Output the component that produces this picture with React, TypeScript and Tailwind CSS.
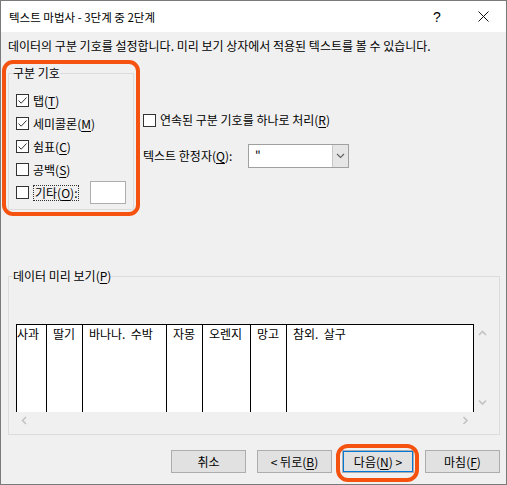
import React from 'react';

// Windows-style "Text Import Wizard" step 2 dialog

const Mn = ({ k }: { k: string }) => (
  <>
    (<span className="underline underline-offset-2">{k}</span>)
  </>
);

const Check = ({ checked }: { checked?: boolean }) => (
  <span className="w-[13px] h-[13px] border border-[#333333] bg-white flex items-center justify-center shrink-0">
    {checked && (
      <svg width="11" height="11" viewBox="0 0 11 11">
        <path d="M1.5 5.5 L4.2 8.2 L9.5 2.5" stroke="#333333" strokeWidth="1" fill="none" />
      </svg>
    )}
  </span>
);

const Chevron = ({ dir }: { dir: 'up' | 'down' | 'left' | 'right' }) => {
  const d = {
    up: 'M1 5 L4.5 1.5 L8 5',
    down: 'M1 1.5 L4.5 5 L8 1.5',
    left: 'M5 1 L1.5 4.5 L5 8',
    right: 'M1.5 1 L5 4.5 L1.5 8',
  }[dir];
  const horiz = dir === 'left' || dir === 'right';
  return (
    <svg width={horiz ? 7 : 9} height={horiz ? 9 : 7} viewBox={horiz ? '0 0 7 9' : '0 0 9 7'}>
      <path d={d} stroke="#c2c2c2" strokeWidth="1.6" fill="none" />
    </svg>
  );
};

const columns = [
  { text: '사과', w: 'w-[30px]', pad: 'pl-0' },
  { text: '딸기', w: 'w-[36px]', pad: 'pl-[6px]' },
  { text: '바나나.  수박', w: 'w-[84px]', pad: 'pl-[6px]' },
  { text: '자몽', w: 'w-[36px]', pad: 'pl-[6px]' },
  { text: '오렌지', w: 'w-[48px]', pad: 'pl-[6px]' },
  { text: '망고', w: 'w-[36px]', pad: 'pl-[6px]' },
  { text: '참외.  살구', w: 'w-[187px]', pad: 'pl-[6px]' },
];

const Button = ({ children, className }: { children: React.ReactNode; className: string }) => (
  <div
    className={`h-[23px] bg-[#e1e1e1] border border-[#adadad] flex items-center justify-center leading-[16px] ${className}`}
  >
    {children}
  </div>
);

export default function App() {
  return (
    <div className="relative w-[507px] h-[485px] bg-[#f0f0f0] border border-[#7a7a7a] flex flex-col text-[12px] text-black font-['Noto_Sans_CJK_KR',sans-serif] overflow-hidden">
      {/* Title bar */}
      <div className="h-[31px] bg-white flex items-center pl-[8px] shrink-0">
        <span className="flex-1 text-[11.5px] leading-[16px]">텍스트 마법사 - 3단계 중 2단계</span>
        <span className="w-[46px] text-center text-[14px] leading-[16px] font-['Liberation_Sans',sans-serif]">?</span>
        <span className="w-[46px] flex items-center justify-center">
          <svg width="11" height="11" viewBox="0 0 11 11">
            <path d="M0.5 0.5 L10.5 10.5 M10.5 0.5 L0.5 10.5" stroke="#111111" strokeWidth="1" />
          </svg>
        </span>
      </div>

      {/* Description */}
      <div className="pl-[7px] pt-[6px] leading-[16px]">
        데이터의 구분 기호를 설정합니다. 미리 보기 상자에서 적용된 텍스트를 볼 수 있습니다.
      </div>

      {/* Delimiters + options */}
      <div className="flex mt-[12px]">
        <fieldset className="ml-[7px] w-[126px] h-[144px] border border-[#dcdcdc]">
          <legend className="ml-[4px] leading-[14px]">구분 기호</legend>
          <div className="pl-[7px] pt-[9px] flex flex-col">
            <div className="h-[23px] flex items-center gap-[4px]">
              <Check checked />
              <span>
                탭<Mn k="T" />
              </span>
            </div>
            <div className="h-[23px] flex items-center gap-[4px]">
              <Check checked />
              <span>
                세미콜론<Mn k="M" />
              </span>
            </div>
            <div className="h-[23px] flex items-center gap-[4px]">
              <Check checked />
              <span>
                쉼표<Mn k="C" />
              </span>
            </div>
            <div className="h-[23px] flex items-center gap-[4px]">
              <Check />
              <span>
                공백<Mn k="S" />
              </span>
            </div>
            <div className="h-[23px] flex items-center gap-[4px]">
              <Check />
              <span className="border border-dotted border-[#333333] leading-[14px] px-[1px]">
                기타<Mn k="O" />:
              </span>
              <span className="ml-[7px] w-[36px] h-[23px] bg-white border border-[#adadad]" />
            </div>
          </div>
        </fieldset>

        <div className="ml-[9px] flex flex-col">
          <div className="mt-[46px] h-[16px] flex items-center gap-[4px]">
            <Check />
            <span className="leading-[16px]">
              연속된 구분 기호를 하나로 처리<Mn k="R" />
            </span>
          </div>
          <div className="mt-[16px] h-[24px] flex items-center">
            <span className="w-[105px] leading-[16px]">
              텍스트 한정자<Mn k="Q" />:
            </span>
            <div className="w-[101px] h-[24px] border border-[#a0a0a0] bg-white flex">
              <span className="flex-1 pl-[6px] leading-[20px]">"</span>
              <span className="w-[16px] bg-[#e6e6e6] border-l border-[#c8c8c8] flex items-center justify-center">
                <svg width="9" height="6" viewBox="0 0 9 6">
                  <path d="M1 1 L4.5 4.5 L8 1" stroke="#606060" strokeWidth="1.1" fill="none" />
                </svg>
              </span>
            </div>
          </div>
        </div>
      </div>

      {/* Data preview */}
      <fieldset className="ml-[7px] mt-[59px] w-[492px] h-[166px] border border-[#dcdcdc]">
        <legend className="ml-[4px] leading-[14px]">
          데이터 미리 보기<Mn k="P" />
        </legend>
        <div className="ml-[7px] mt-[41px] w-[475px] flex flex-col">
          <div className="flex">
            <div className="w-[458px] h-[88px] bg-white border-t border-l border-black flex">
              {columns.map((c) => (
                <div key={c.text} className={`${c.w} ${c.pad} h-full border-r border-black pt-[1px] leading-[16px] whitespace-pre`}>
                  {c.text}
                </div>
              ))}
            </div>
            <div className="w-[17px] h-[88px] flex flex-col items-center justify-between py-[6px]">
              <Chevron dir="up" />
              <Chevron dir="down" />
            </div>
          </div>
          <div className="w-[458px] h-[16px] flex items-center justify-between px-[5px]">
            <Chevron dir="left" />
            <Chevron dir="right" />
          </div>
        </div>
      </fieldset>

      {/* Buttons */}
      <div className="flex mt-[15px]">
        <Button className="ml-[170px] w-[75px]">취소</Button>
        <Button className="ml-[11px] w-[75px]">
          &lt; 뒤로<Mn k="B" />
        </Button>
        <Button className="ml-[10px] w-[72px] border-[#0078d7] shadow-[inset_0_0_0_1px_#0078d7]">
          다음<Mn k="N" /> &gt;
        </Button>
        <Button className="ml-[11px] w-[75px]">
          마침<Mn k="F" />
        </Button>
      </div>

      {/* Orange highlight annotations */}
      <div className="absolute left-[1px] top-[59px] w-[138px] h-[156px] border-[4px] border-[#f5520f] rounded-[11px]" />
      <div className="absolute left-[335px] top-[443px] w-[83px] h-[38px] border-[4px] border-[#f5520f] rounded-[12px]" />
    </div>
  );
}
